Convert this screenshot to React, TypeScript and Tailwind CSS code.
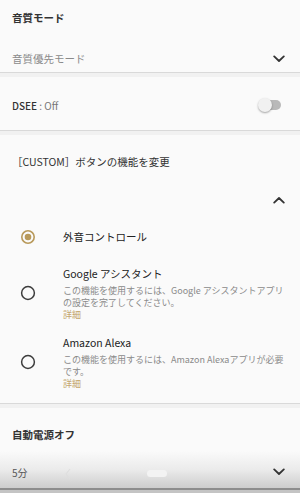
import React from 'react';

const font = { fontFamily: '"Noto Sans CJK JP", "Noto Sans", Roboto, sans-serif' };

const ChevronDown = () => (
  <svg width="12" height="8" viewBox="0 0 12 8" className="shrink-0">
    <path d="M1.2 1.4 6 6 10.8 1.4" fill="none" stroke="#333" strokeWidth="1.8" strokeLinecap="round" strokeLinejoin="round" />
  </svg>
);

const ChevronUp = () => (
  <svg width="12" height="8" viewBox="0 0 12 8" className="shrink-0">
    <path d="M1.2 6.6 6 2 10.8 6.6" fill="none" stroke="#333" strokeWidth="1.8" strokeLinecap="round" strokeLinejoin="round" />
  </svg>
);

const Radio = ({ checked }: { checked?: boolean }) => (
  <svg width="16" height="16" viewBox="0 0 16 16" className="shrink-0">
    {checked ? (
      <>
        <circle cx="8" cy="8" r="6.2" fill="none" stroke="#b8995a" strokeWidth="1.6" />
        <circle cx="8" cy="8" r="3.3" fill="#b8995a" />
      </>
    ) : (
      <circle cx="8" cy="8" r="6.4" fill="none" stroke="#3c3c3c" strokeWidth="1.5" />
    )}
  </svg>
);

const Divider = () => <div className="h-[5px] border-t border-[#d9d9d9] bg-[#f1f1f1]" />;

const Option = ({ title, desc }: { title: string; desc: string }) => (
  <div className="flex items-center">
    <div className="w-[63px] flex justify-center pl-[3px] pr-[10px]">
      <Radio />
    </div>
    <div className="flex-1 pr-[16px]">
      <div className="text-[10.5px] leading-[16px] text-[#222]">{title}</div>
      <div className="mt-[3px] text-[9px] leading-[11.5px] text-[#8a8a8a]">{desc}</div>
      <div className="mt-[1px] text-[9px] leading-[11px] text-[#c4a66c]">詳細</div>
    </div>
  </div>
);

export default function App() {
  return (
    <div className="w-[300px] h-[493px] relative overflow-hidden bg-[#fafafa]" style={font}>
      <div className="h-[46px] pt-[10px] px-[12px]">
        <div className="text-[10.5px] leading-[16px] font-bold text-[#333]">音質モード</div>
      </div>
      <div className="h-[26px] px-[12px] pr-[15px] flex items-center justify-between">
        <span className="text-[10.5px] text-[#8a8a8a]">音質優先モード</span>
        <ChevronDown />
      </div>
      <Divider />
      <div className="h-[53px] pt-[3px] px-[12px] pr-[19px] flex items-center justify-between">
        <span className="text-[10px]">
          <span className="font-medium text-[#333]">DSEE</span>
          <span className="text-[#777]"> : Off</span>
        </span>
        <div className="relative w-[23px] h-[14px] flex items-center">
          <div className="ml-[5px] w-[18px] h-[10px] rounded-full bg-[#b9b9b9]" />
          <div className="absolute left-0 top-0 w-[14px] h-[14px] rounded-full bg-[#f1f1f1] shadow-[0_1px_2px_rgba(0,0,0,0.35)]" />
        </div>
      </div>
      <Divider />
      <div className="h-[54px] px-[12px] flex items-center">
        <span className="text-[10.5px] text-[#333]">［CUSTOM］ボタンの機能を変更</span>
      </div>
      <div className="h-[22px] pr-[15px] flex items-center justify-end">
        <ChevronUp />
      </div>
      <div className="h-[52px] flex items-center">
        <div className="w-[63px] flex justify-center pl-[3px] pr-[10px]">
          <Radio checked />
        </div>
        <span className="text-[10.5px] text-[#222]">外音コントロール</span>
      </div>
      <div className="pt-[3px] pb-[15px]">
        <Option title="Google アシスタント" desc="この機能を使用するには、Google アシスタントアプリの設定を完了してください。" />
      </div>
      <div className="pb-[14px]">
        <Option title="Amazon Alexa" desc="この機能を使用するには、Amazon Alexaアプリが必要です。" />
      </div>
      <Divider />
      <div className="h-[44px] pt-[19px] px-[12px]">
        <div className="text-[10.5px] leading-[16px] font-bold text-[#333]">自動電源オフ</div>
      </div>

      <div className="absolute left-0 right-0 bottom-0 h-[42px] pointer-events-none">
        <div className="h-[37px] bg-gradient-to-b from-[rgba(250,250,250,0)] via-[rgba(225,225,225,0.6)] to-[rgba(200,200,200,0.9)] flex items-center">
          <svg width="6" height="12" viewBox="0 0 6 12" className="ml-[65px] mt-[8px]">
            <path d="M5 1 1 6 5 11" fill="none" stroke="#dedede" strokeWidth="1.2" />
          </svg>
          <div className="ml-[76px] mt-[8px] w-[20px] h-[7px] rounded-full bg-[#f3f3f3]" />
        </div>
        <div className="h-[2px] bg-[#8d8d8d]" />
        <div className="h-[3px] bg-[#c4c4c4]" />
      </div>

      <div className="relative h-[40px] px-[12px] pr-[15px] flex items-center justify-between">
        <span className="text-[10px] text-[#555]">5分</span>
        <ChevronDown />
      </div>
    </div>
  );
}
